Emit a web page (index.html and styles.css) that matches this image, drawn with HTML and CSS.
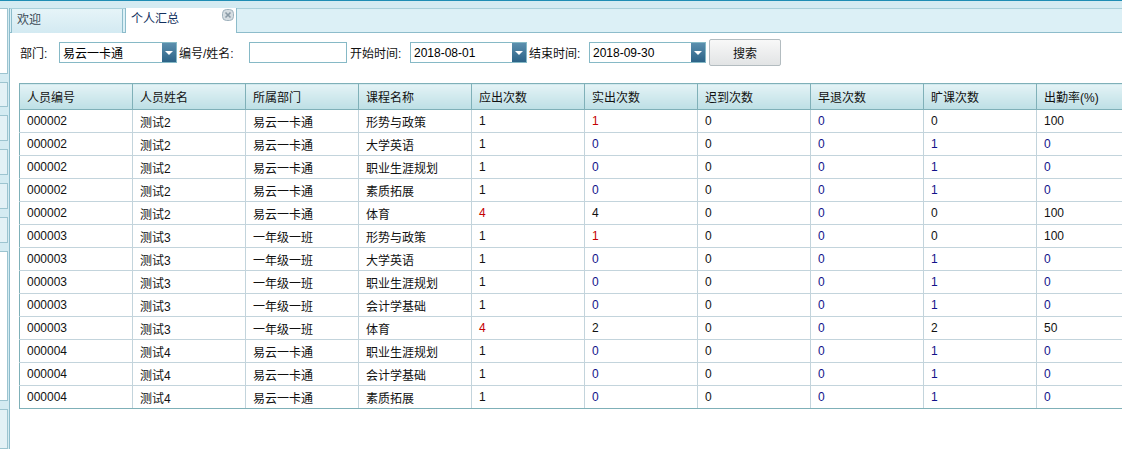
FILE: index.html
```html
<!DOCTYPE html>
<html lang="zh-CN">
<head>
<meta charset="utf-8">
<title>个人汇总</title>
<link rel="stylesheet" href="styles.css">
</head>
<body>
<div class="topline"></div>
<div class="wrap">
  <aside class="side">
    <div class="sbox b1"></div>
    <div class="sbox b2"></div>
    <div class="sbox b3"></div>
    <div class="sbox b3"></div>
    <div class="sbox b3"></div>
    <div class="sbox b3"></div>
    <div class="sbox b4"></div>
    <div class="sbox b5"></div>
  </aside>
  <main class="panel">
    <div class="tabs">
      <div class="tab">欢迎</div>
      <div class="tab active">个人汇总
        <span class="close"><svg width="12" height="12" viewBox="0 0 12 12"><rect x="0.5" y="0.5" width="11" height="11" rx="4" fill="#d5dde2" stroke="#9fb2bd"/><path d="M3.5 3.5 L8.5 8.5 M8.5 3.5 L3.5 8.5" stroke="#8a9aa6" stroke-width="1.6"/></svg></span>
      </div>
    </div>
    <div class="content">
      <div class="filters">
        <span class="lbl l-dept">部门:</span>
        <div class="combo c-dept"><span class="val">易云一卡通</span><span class="arrow"></span></div>
        <span class="lbl l-name">编号/姓名:</span>
        <div class="input"></div>
        <span class="lbl l-start">开始时间:</span>
        <div class="combo c-date"><span class="val">2018-08-01</span><span class="arrow"></span></div>
        <span class="lbl l-end">结束时间:</span>
        <div class="combo c-date"><span class="val">2018-09-30</span><span class="arrow"></span></div>
        <button class="btn">搜索</button>
      </div>
      <div class="grid">
        <table>
          <thead>
            <tr><th>人员编号</th><th>人员姓名</th><th>所属部门</th><th>课程名称</th><th>应出次数</th><th>实出次数</th><th>迟到次数</th><th>早退次数</th><th>旷课次数</th><th>出勤率(%)</th></tr>
          </thead>
          <tbody>
            <tr><td>000002</td><td>测试2</td><td>易云一卡通</td><td>形势与政策</td><td>1</td><td class="red">1</td><td>0</td><td class="blue">0</td><td>0</td><td>100</td></tr>
            <tr><td>000002</td><td>测试2</td><td>易云一卡通</td><td>大学英语</td><td>1</td><td class="blue">0</td><td>0</td><td class="blue">0</td><td class="blue">1</td><td class="blue">0</td></tr>
            <tr><td>000002</td><td>测试2</td><td>易云一卡通</td><td>职业生涯规划</td><td>1</td><td class="blue">0</td><td>0</td><td class="blue">0</td><td class="blue">1</td><td class="blue">0</td></tr>
            <tr><td>000002</td><td>测试2</td><td>易云一卡通</td><td>素质拓展</td><td>1</td><td class="blue">0</td><td>0</td><td class="blue">0</td><td class="blue">1</td><td class="blue">0</td></tr>
            <tr><td>000002</td><td>测试2</td><td>易云一卡通</td><td>体育</td><td class="red">4</td><td>4</td><td>0</td><td class="blue">0</td><td>0</td><td>100</td></tr>
            <tr><td>000003</td><td>测试3</td><td>一年级一班</td><td>形势与政策</td><td>1</td><td class="red">1</td><td>0</td><td class="blue">0</td><td>0</td><td>100</td></tr>
            <tr><td>000003</td><td>测试3</td><td>一年级一班</td><td>大学英语</td><td>1</td><td class="blue">0</td><td>0</td><td class="blue">0</td><td class="blue">1</td><td class="blue">0</td></tr>
            <tr><td>000003</td><td>测试3</td><td>一年级一班</td><td>职业生涯规划</td><td>1</td><td class="blue">0</td><td>0</td><td class="blue">0</td><td class="blue">1</td><td class="blue">0</td></tr>
            <tr><td>000003</td><td>测试3</td><td>一年级一班</td><td>会计学基础</td><td>1</td><td class="blue">0</td><td>0</td><td class="blue">0</td><td class="blue">1</td><td class="blue">0</td></tr>
            <tr><td>000003</td><td>测试3</td><td>一年级一班</td><td>体育</td><td class="red">4</td><td>2</td><td>0</td><td class="blue">0</td><td>2</td><td>50</td></tr>
            <tr><td>000004</td><td>测试4</td><td>易云一卡通</td><td>职业生涯规划</td><td>1</td><td class="blue">0</td><td>0</td><td class="blue">0</td><td class="blue">1</td><td class="blue">0</td></tr>
            <tr><td>000004</td><td>测试4</td><td>易云一卡通</td><td>会计学基础</td><td>1</td><td class="blue">0</td><td>0</td><td class="blue">0</td><td class="blue">1</td><td class="blue">0</td></tr>
            <tr><td>000004</td><td>测试4</td><td>易云一卡通</td><td>素质拓展</td><td>1</td><td class="blue">0</td><td>0</td><td class="blue">0</td><td class="blue">1</td><td class="blue">0</td></tr>
          </tbody>
        </table>
      </div>
    </div>
  </main>
</div>
</body>
</html>
```
FILE: styles.css
```css
* { box-sizing: border-box; }
html, body { margin: 0; padding: 0; }
body {
  width: 1122px;
  height: 449px;
  overflow: hidden;
  background: #d4ebf2;
  font-family: "Liberation Sans", "Noto Sans CJK SC", sans-serif;
  font-size: 12px;
  color: #000;
}
.topline { height: 1px; background: #1f8db4; }
.wrap {
  display: flex;
  height: 448px;
  padding-top: 7px;
}
.side {
  width: 8px;
  display: flex;
  flex-direction: column;
  gap: 8px;
  margin-right: 1px;
}
.sbox {
  background: #e3f1f6;
  border: 1px solid #9cc4d0;
  border-left: none;
}
.b1 { height: 66px; background: #fff; }
.b2 { height: 25px; }
.b3 { height: 26px; }
.b4 { height: 150px; background: #fff; }
.b5 { height: 40px; }
.panel {
  flex: 1;
  background: #fff;
  border-left: 1px solid #8dbccb;
  display: flex;
  flex-direction: column;
  min-width: 0;
}
.tabs {
  height: 25px;
  background: #dcf0f6;
  border-bottom: 1px solid #8dbccb;
  border-top: 1px solid #a9d0db;
  display: flex;
  align-items: flex-end;
  padding-left: 1px;
  gap: 2px;
}
.tab {
  position: relative;
  width: 112px;
  height: 24px;
  border: 1px solid #8dbccb;
  border-bottom: none;
  border-top: none;
  background: linear-gradient(#e6f4f8, #d3eaf2);
  color: #3b4a55;
  padding-left: 5px;
  line-height: 23px;
  margin-bottom: -1px;
}
.tab.active {
  background: #fff;
  color: #12305e;
  height: 25px;
}
.close {
  position: absolute;
  right: 2px;
  top: 1px;
  width: 12px;
  height: 12px;
  line-height: 0;
}
.content {
  padding: 6px 0 0 9px;
  overflow: hidden;
}
.filters {
  display: flex;
  align-items: center;
  height: 27px;
}
.lbl { white-space: nowrap; color: #111; }
.l-dept { margin-left: 1px; width: 39px; }
.l-name { margin-left: 2px; width: 68px; }
.l-start { margin-left: 3px; width: 60px; }
.l-end { margin-left: 2px; width: 60px; }
.combo {
  height: 21px;
  border: 1px solid #86b9c6;
  display: flex;
  align-items: center;
  justify-content: space-between;
  padding: 0 0 0 3px;
  background: #fff;
}
.c-dept { width: 118px; }
.c-date { width: 117px; }
.val { color: #000; }
.arrow {
  width: 14px;
  height: 19px;
  background: linear-gradient(#5b8fae, #2c6387);
  position: relative;
}
.arrow::after {
  content: "";
  position: absolute;
  left: 3px;
  top: 8px;
  border-left: 4px solid transparent;
  border-right: 4px solid transparent;
  border-top: 4px solid #fff;
}
.input {
  width: 98px;
  height: 21px;
  border: 1px solid #86b9c6;
  margin-left: 2px;
}
.btn {
  margin-left: 3px;
  width: 72px;
  height: 27px;
  border: 1px solid #b3bcc0;
  border-radius: 2px;
  background: linear-gradient(#f8f8f8, #e2e4e5);
  font-family: "Liberation Sans", "Noto Sans CJK SC", sans-serif;
  font-size: 12px;
  color: #111;
  padding: 0;
}
.grid {
  margin-top: 17px;
  width: 1140px;
}
table {
  border-collapse: collapse;
  table-layout: fixed;
  width: 1130px;
  border: 1px solid #7fb0b8;
}
th {
  height: 26px;
  width: 113px;
  text-align: left;
  font-weight: normal;
  padding: 0 0 0 7px;
  background: linear-gradient(#e4f3f6, #bddfe5);
  border-right: 1px solid #7fb0b8;
  border-bottom: 1px solid #7fb0b8;
  color: #111;
}
td {
  height: 23px;
  padding: 0 0 0 7px;
  border-right: 1px solid #c3d4dc;
  border-bottom: 1px solid #c3d4dc;
  color: #111;
  white-space: nowrap;
}
tbody tr:last-child td { border-bottom: 1px solid #7fb0b8; }
td.red { color: #c40000; }
td.blue { color: #12128a; }
```
